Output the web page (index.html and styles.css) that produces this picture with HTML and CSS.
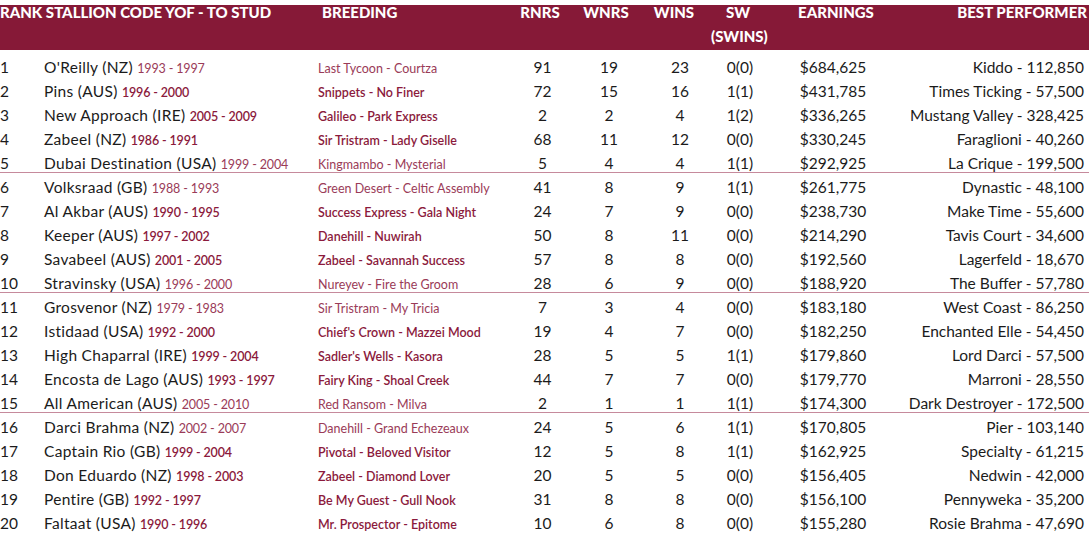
FILE: index.html
```html
<!DOCTYPE html>
<html>
<head>
<meta charset="utf-8">
<link rel="stylesheet" href="styles.css">
</head>
<body>
<div class="table">
  <div class="head">
    <div class="h">RANK STALLION CODE YOF - TO STUD</div>
    <div class="h">BREEDING</div>
    <div class="h c">RNRS</div>
    <div class="h c">WNRS</div>
    <div class="h c">WINS</div>
    <div class="h c">SW<span class="h2">(SWINS)</span></div>
    <div class="h c">EARNINGS</div>
    <div class="h r">BEST PERFORMER</div>
  </div>

  <div class="group">
    <div class="row light"><span>1</span><span class="name">O'Reilly (NZ) <em>1993 - 1997</em></span><span class="br">Last Tycoon - Courtza</span><span class="c">91</span><span class="c">19</span><span class="c">23</span><span class="c">0(0)</span><span class="c">$684,625</span><span class="r">Kiddo - 112,850</span></div>
    <div class="row"><span>2</span><span class="name">Pins (AUS) <em>1996 - 2000</em></span><span class="br">Snippets - No Finer</span><span class="c">72</span><span class="c">15</span><span class="c">16</span><span class="c">1(1)</span><span class="c">$431,785</span><span class="r">Times Ticking - 57,500</span></div>
    <div class="row"><span>3</span><span class="name">New Approach (IRE) <em>2005 - 2009</em></span><span class="br">Galileo - Park Express</span><span class="c">2</span><span class="c">2</span><span class="c">4</span><span class="c">1(2)</span><span class="c">$336,265</span><span class="r">Mustang Valley - 328,425</span></div>
    <div class="row"><span>4</span><span class="name">Zabeel (NZ) <em>1986 - 1991</em></span><span class="br">Sir Tristram - Lady Giselle</span><span class="c">68</span><span class="c">11</span><span class="c">12</span><span class="c">0(0)</span><span class="c">$330,245</span><span class="r">Faraglioni - 40,260</span></div>
    <div class="row light"><span>5</span><span class="name">Dubai Destination (USA) <em>1999 - 2004</em></span><span class="br">Kingmambo - Mysterial</span><span class="c">5</span><span class="c">4</span><span class="c">4</span><span class="c">1(1)</span><span class="c">$292,925</span><span class="r">La Crique - 199,500</span></div>
  </div>

  <div class="group">
    <div class="row light"><span>6</span><span class="name">Volksraad (GB) <em>1988 - 1993</em></span><span class="br">Green Desert - Celtic Assembly</span><span class="c">41</span><span class="c">8</span><span class="c">9</span><span class="c">1(1)</span><span class="c">$261,775</span><span class="r">Dynastic - 48,100</span></div>
    <div class="row"><span>7</span><span class="name">Al Akbar (AUS) <em>1990 - 1995</em></span><span class="br">Success Express - Gala Night</span><span class="c">24</span><span class="c">7</span><span class="c">9</span><span class="c">0(0)</span><span class="c">$238,730</span><span class="r">Make Time - 55,600</span></div>
    <div class="row"><span>8</span><span class="name">Keeper (AUS) <em>1997 - 2002</em></span><span class="br">Danehill - Nuwirah</span><span class="c">50</span><span class="c">8</span><span class="c">11</span><span class="c">0(0)</span><span class="c">$214,290</span><span class="r">Tavis Court - 34,600</span></div>
    <div class="row"><span>9</span><span class="name">Savabeel (AUS) <em>2001 - 2005</em></span><span class="br">Zabeel - Savannah Success</span><span class="c">57</span><span class="c">8</span><span class="c">8</span><span class="c">0(0)</span><span class="c">$192,560</span><span class="r">Lagerfeld - 18,670</span></div>
    <div class="row light"><span>10</span><span class="name">Stravinsky (USA) <em>1996 - 2000</em></span><span class="br">Nureyev - Fire the Groom</span><span class="c">28</span><span class="c">6</span><span class="c">9</span><span class="c">0(0)</span><span class="c">$188,920</span><span class="r">The Buffer - 57,780</span></div>
  </div>

  <div class="group">
    <div class="row light"><span>11</span><span class="name">Grosvenor (NZ) <em>1979 - 1983</em></span><span class="br">Sir Tristram - My Tricia</span><span class="c">7</span><span class="c">3</span><span class="c">4</span><span class="c">0(0)</span><span class="c">$183,180</span><span class="r">West Coast - 86,250</span></div>
    <div class="row"><span>12</span><span class="name">Istidaad (USA) <em>1992 - 2000</em></span><span class="br">Chief's Crown - Mazzei Mood</span><span class="c">19</span><span class="c">4</span><span class="c">7</span><span class="c">0(0)</span><span class="c">$182,250</span><span class="r">Enchanted Elle - 54,450</span></div>
    <div class="row"><span>13</span><span class="name">High Chaparral (IRE) <em>1999 - 2004</em></span><span class="br">Sadler's Wells - Kasora</span><span class="c">28</span><span class="c">5</span><span class="c">5</span><span class="c">1(1)</span><span class="c">$179,860</span><span class="r">Lord Darci - 57,500</span></div>
    <div class="row"><span>14</span><span class="name">Encosta de Lago (AUS) <em>1993 - 1997</em></span><span class="br">Fairy King - Shoal Creek</span><span class="c">44</span><span class="c">7</span><span class="c">7</span><span class="c">0(0)</span><span class="c">$179,770</span><span class="r">Marroni - 28,550</span></div>
    <div class="row light"><span>15</span><span class="name">All American (AUS) <em>2005 - 2010</em></span><span class="br">Red Ransom - Milva</span><span class="c">2</span><span class="c">1</span><span class="c">1</span><span class="c">1(1)</span><span class="c">$174,300</span><span class="r">Dark Destroyer - 172,500</span></div>
  </div>

  <div class="group last">
    <div class="row light"><span>16</span><span class="name">Darci Brahma (NZ) <em>2002 - 2007</em></span><span class="br">Danehill - Grand Echezeaux</span><span class="c">24</span><span class="c">5</span><span class="c">6</span><span class="c">1(1)</span><span class="c">$170,805</span><span class="r">Pier - 103,140</span></div>
    <div class="row"><span>17</span><span class="name">Captain Rio (GB) <em>1999 - 2004</em></span><span class="br">Pivotal - Beloved Visitor</span><span class="c">12</span><span class="c">5</span><span class="c">8</span><span class="c">1(1)</span><span class="c">$162,925</span><span class="r">Specialty - 61,215</span></div>
    <div class="row"><span>18</span><span class="name">Don Eduardo (NZ) <em>1998 - 2003</em></span><span class="br">Zabeel - Diamond Lover</span><span class="c">20</span><span class="c">5</span><span class="c">5</span><span class="c">0(0)</span><span class="c">$156,405</span><span class="r">Nedwin - 42,000</span></div>
    <div class="row"><span>19</span><span class="name">Pentire (GB) <em>1992 - 1997</em></span><span class="br">Be My Guest - Gull Nook</span><span class="c">31</span><span class="c">8</span><span class="c">8</span><span class="c">0(0)</span><span class="c">$156,100</span><span class="r">Pennyweka - 35,200</span></div>
    <div class="row"><span>20</span><span class="name">Faltaat (USA) <em>1990 - 1996</em></span><span class="br">Mr. Prospector - Epitome</span><span class="c">10</span><span class="c">6</span><span class="c">8</span><span class="c">0(0)</span><span class="c">$155,280</span><span class="r">Rosie Brahma - 47,690</span></div>
  </div>
</div>
</body>
</html>
```

FILE: styles.css
```css
html, body {
  margin: 0;
  padding: 0;
  background: #ffffff;
}
body {
  font-family: Lato, "Liberation Sans", sans-serif;
  color: #1b1b1b;
  width: 1089px;
  overflow: hidden;
}
.table {
  padding-top: 5px;
}
.head {
  display: grid;
  grid-template-columns: 322px 183px 70px 62px 74px 54px 142px 180px 2px;
  height: 45px;
  background: #861937;
  color: #ffffff;
  font-size: 15px;
  font-weight: 900;
}
.h {
  line-height: 18px;
  margin-top: -2px;
  white-space: nowrap;
}
.h2 {
  display: block;
  margin-top: 6px;
}
.c { text-align: center; }
.r { text-align: right; }
.group {
  border-bottom: 1px solid #c68a9c;
  margin-bottom: 2px;
}
.group.last { border-bottom: none; margin-bottom: 0; }
.head + .group { padding-top: 5px; }
.row {
  display: grid;
  grid-template-columns: 44px 274px 192px 65px 68px 74px 46px 140px 181px;
  align-items: baseline;
  height: 24px;
  line-height: 24px;
  font-size: 15.5px;
  white-space: nowrap;
}
.group .row:last-child { height: 21px; }
.group.last .row:last-child { height: 24px; }
.name {
  letter-spacing: 0.3px;
}
.name em {
  font-style: normal;
  font-size: 12.5px;
  letter-spacing: -0.15px;
  color: #8b1a3c;
  font-weight: 600;
}
.br {
  font-size: 12.5px;
  color: #8b1a3c;
  font-weight: 600;
}
.light .name em,
.light .br {
  font-weight: 400;
  color: #9a3b58;
}
```
